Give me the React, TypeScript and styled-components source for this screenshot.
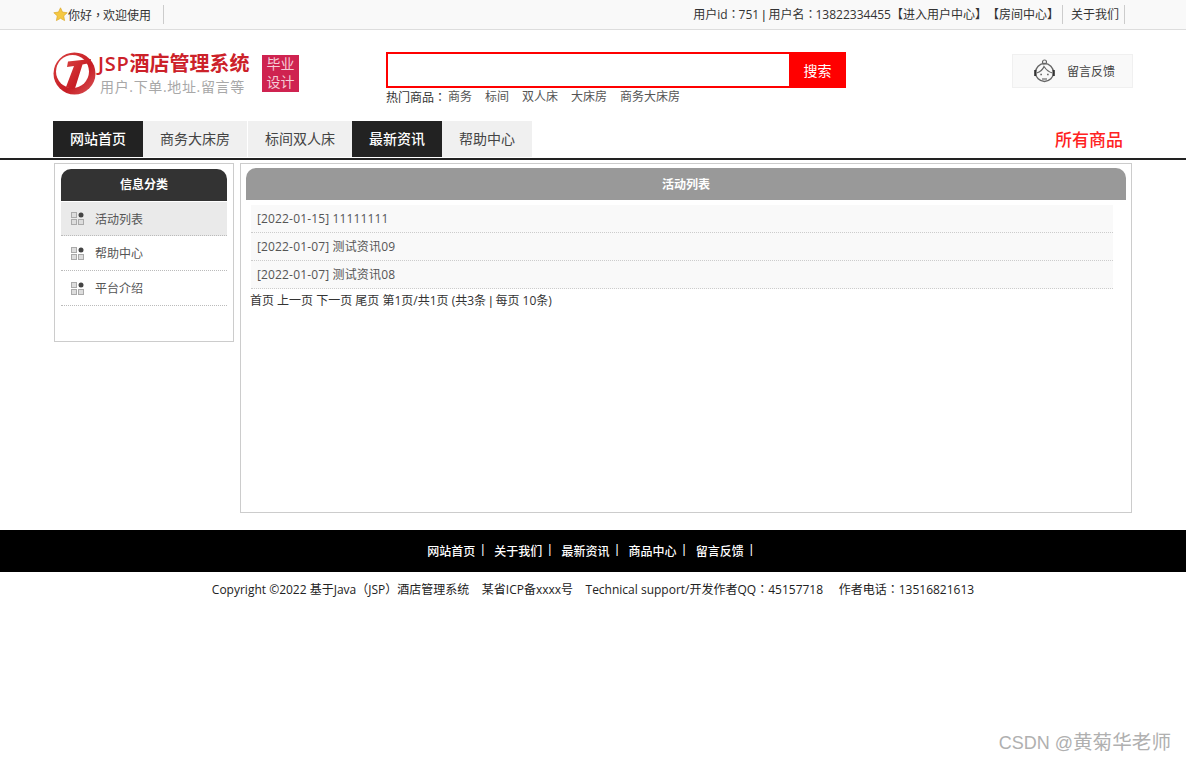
import React from "react";
import styled, { createGlobalStyle } from "styled-components";

const GlobalStyle = createGlobalStyle`
  html, body {
    margin: 0;
    padding: 0;
    background: #fff;
    font-family: "Open Sans", "Noto Sans CJK SC", sans-serif;
    font-size: 12px;
    color: #333;
  }
`;

const Page = styled.div`
  position: relative;
  height: 763px;
  overflow: hidden;
`;

const Punct = styled.span<{ $tight?: boolean }>`
  font-family: "Noto Sans CJK TC", sans-serif;
  letter-spacing: ${(p) => (p.$tight ? "-1px" : "0")};
`;

const Pipe = styled.span`
  font-family: "Liberation Sans", sans-serif;
`;

const TopBar = styled.div`
  height: 29px;
  background: #f9f9f9;
  border-bottom: 1px solid #ddd;
`;

const Wrap = styled.div`
  width: 1080px;
  margin: 0 auto;
  display: flex;
  align-items: center;
  justify-content: space-between;
`;

const TopWrap = styled(Wrap)`
  height: 29px;
`;

const TopLeft = styled.div`
  display: flex;
  align-items: center;
  height: 19px;
  padding-right: 12px;
  border-right: 1px solid #ccc;
`;

const TopRight = styled.div`
  display: flex;
  align-items: center;
  height: 19px;
  margin-right: 8px;
`;

const TopCell = styled.span<{ $bordered?: boolean }>`
  display: block;
  line-height: 19px;
  color: #333;
  white-space: pre;
  text-spacing-trim: space-all;
  ${(p) =>
    p.$bordered &&
    `
    margin-left: 3px;
    padding: 0 5px 0 8px;
    border-left: 1px solid #ccc;
    border-right: 1px solid #ccc;
  `}
`;

const Header = styled(Wrap)`
  height: 91px;
  align-items: flex-start;
  justify-content: flex-start;
`;

const Logo = styled.div`
  display: flex;
  align-items: center;
  margin-top: 22px;
  width: 333px;
`;

const LogoText = styled.div`
  margin-left: 2px;
  width: 149px;
`;

const LogoTitle = styled.div`
  font-size: 20px;
  font-weight: 700;
  line-height: 24px;
  color: #cc2129;
  white-space: nowrap;
`;

const LogoLatin = styled.span`
  font-weight: 600;
  letter-spacing: 0.7px;
`;

const LogoSub = styled.div`
  font-size: 14px;
  line-height: 19px;
  margin: 1px 0 -1px;
  padding-left: 2px;
  color: #a8a8a8;
  white-space: nowrap;
  letter-spacing: 0.65px;
`;

const Badge = styled.div`
  width: 37px;
  height: 37px;
  margin-left: 15px;
  background: #cf2350;
  color: #f5ccd6;
  font-size: 14px;
  line-height: 18px;
  text-align: center;
`;

const SearchCol = styled.div`
  width: 460px;
  margin-top: 22px;
`;

const SearchBox = styled.div`
  display: flex;
  height: 36px;
`;

const SearchInput = styled.div`
  flex: 1;
  box-sizing: border-box;
  border: 2px solid #f00;
  border-right: none;
  background: #fff;
`;

const SearchButton = styled.button`
  width: 57px;
  border: none;
  padding: 0;
  background: #f00;
  color: #fff;
  font: inherit;
  font-size: 14px;
`;

const HotRow = styled.div`
  display: flex;
  margin-top: 1px;
  height: 16px;
  line-height: 16px;
  color: #333;
`;

const HotLabel = styled.span`
  margin-right: 2px;
`;

const HotLink = styled.span`
  margin-right: 13px;
  color: #555;
`;

const Feedback = styled.div`
  box-sizing: border-box;
  width: 121px;
  height: 34px;
  margin-top: 24px;
  margin-left: auto;
  display: flex;
  align-items: center;
  padding-left: 20px;
  gap: 11px;
  background: #f9f9f9;
  border: 1px solid #f0f0f0;
  color: #444;
`;

const NavBar = styled.div`
  border-bottom: 2px solid #222;
  height: 37px;
`;

const NavWrap = styled(Wrap)`
  height: 36px;
  align-items: flex-start;
`;

const Tabs = styled.div`
  display: flex;
`;

const Tab = styled.div<{ $dark?: boolean; $spaced?: boolean }>`
  padding: 0 17px;
  height: 36px;
  line-height: 36px;
  font-size: 14px;
  font-weight: ${(p) => (p.$dark ? 500 : 400)};
  background: ${(p) => (p.$dark ? "#222" : "#f0f0f0")};
  color: ${(p) => (p.$dark ? "#fff" : "#444")};
  margin-left: ${(p) => (p.$spaced ? "1px" : "0")};
`;

const AllGoods = styled.div`
  font-size: 17px;
  line-height: 37px;
  font-weight: 500;
  color: #f22;
  margin-right: 10px;
`;

const Content = styled.div`
  width: 1080px;
  margin: 3px auto 0;
  display: flex;
  align-items: flex-start;
  padding-left: 1px;
  box-sizing: border-box;
`;

const Sidebar = styled.div`
  box-sizing: border-box;
  width: 180px;
  height: 179px;
  margin-right: 6px;
  padding: 5px 6px 0;
  border: 1px solid #ccc;
`;

const SideHead = styled.div`
  height: 32px;
  line-height: 32px;
  background: #333;
  color: #fff;
  font-weight: 700;
  text-align: center;
  border-radius: 10px 10px 0 0;
  margin-bottom: 1px;
`;

const SideItem = styled.div<{ $active?: boolean }>`
  box-sizing: border-box;
  height: ${(p) => (p.$active ? "34px" : "35px")};
  display: flex;
  align-items: center;
  padding-left: 10px;
  gap: 11px;
  color: #555;
  background: ${(p) => (p.$active ? "#eaeaea" : "transparent")};
  border-bottom: 1px dotted #bbb;
`;

const Main = styled.div`
  box-sizing: border-box;
  width: 892px;
  height: 350px;
  padding: 4px 5px 0;
  border: 1px solid #ccc;
`;

const MainHead = styled.div`
  height: 32px;
  line-height: 33px;
  background: #999;
  color: #fff;
  font-weight: 700;
  text-align: center;
  border-radius: 10px 10px 0 0;
  margin-bottom: 5px;
`;

const NewsRow = styled.div`
  box-sizing: border-box;
  width: 862px;
  height: 28px;
  line-height: 27px;
  margin-left: 5px;
  padding-left: 6px;
  background: #f9f9f9;
  border-bottom: 1px dotted #ccc;
  color: #555;
  letter-spacing: 0.15px;
`;

const Pager = styled.div`
  margin-left: 4px;
  line-height: 23px;
  color: #333;
`;

const FootNav = styled.div`
  height: 42px;
  margin-top: 17px;
  padding-right: 6px;
  background: #000;
  display: flex;
  align-items: center;
  justify-content: center;
  color: #fff;
  font-weight: 500;
`;

const FootLink = styled.span`
  display: flex;
  & + & {
    margin-left: 10px;
  }
`;

const FootPipe = styled(Pipe)`
  margin-left: 6px;
`;

const Copyright = styled.div`
  margin-top: 7px;
  line-height: 20px;
  text-align: center;
  color: #222;
  white-space: pre;
`;

const Watermark = styled.div`
  position: absolute;
  right: 15px;
  bottom: 6px;
  font-family: "Liberation Sans", "Noto Sans CJK SC", sans-serif;
  font-size: 18px;
  line-height: 28px;
  color: #b0b0b0;
`;

const WatermarkName = styled.span`
  font-size: 19.600px;
`;

const Star = () => (
  <svg width="15" height="15" viewBox="0 0 15 15" aria-hidden="true">
    <path
      d="M7.500.8l2 4.300 4.700.6-3.500 3.200.9 4.700-4.100-2.300-4.100 2.300.9-4.700L.8 5.700l4.700-.6z"
      fill="#f5c842"
      stroke="#dca92a"
      strokeWidth=".7"
    />
  </svg>
);

const LogoMark = () => (
  <svg width="43" height="43" viewBox="0 0 43 43" aria-hidden="true">
    <defs>
      <linearGradient id="logoRed" x1="0" y1="0" x2="1" y2="1">
        <stop offset="0" stopColor="#d8403f" />
        <stop offset="0.6" stopColor="#c71d24" />
        <stop offset="1" stopColor="#d9575a" />
      </linearGradient>
    </defs>
    <circle cx="21.500" cy="21.500" r="21" fill="url(#logoRed)" />
    <circle cx="19.500" cy="19.500" r="16.500" fill="#fff" />
    <path d="M15 9.500L38 7 37 11 29.500 12.500 21.500 38 13 35 21 14 14 15z" fill="url(#logoRed)" />
  </svg>
);

const Girl = () => (
  <svg width="23" height="24" viewBox="0 0 23 24" fill="none" stroke="#666" aria-hidden="true">
    <circle cx="11.500" cy="13.500" r="9" strokeWidth="1.400" />
    <circle cx="11.500" cy="3" r="2" strokeWidth="1.200" />
    <path d="M3.500 14c3.500-1 6-2.500 7.500-6.500 2 3 4.500 5.500 8.500 6.500" strokeWidth="1.200" />
    <path d="M1.200 11h2.100v6H1.200zM19.700 11h2.100v6h-2.100z" fill="#333" stroke="none" />
    <path d="M7.500 15.500h1.200M14.300 15.500h1.200" strokeWidth="1.500" stroke="#333" />
    <path d="M9 20h5" stroke="#999" strokeWidth="1.800" />
  </svg>
);

const GridIcon = () => (
  <svg width="13" height="13" viewBox="0 0 13 13" fill="#ddd" stroke="#aaa" aria-hidden="true">
    <rect x=".5" y=".5" width="5" height="5" />
    <rect x=".5" y="7.500" width="5" height="5" />
    <rect x="7.500" y="7.500" width="5" height="5" />
    <circle cx="10" cy="3" r="2.500" fill="#444" stroke="none" />
  </svg>
);

const hotLinks = ["商务", "标间", "双人床", "大床房", "商务大床房"];
const sideItems = ["活动列表", "帮助中心", "平台介绍"];
const news = ["[2022-01-15] 11111111", "[2022-01-07] 测试资讯09", "[2022-01-07] 测试资讯08"];
const footLinks = ["网站首页", "关于我们", "最新资讯", "商品中心", "留言反馈"];

export default function App() {
  return (
    <Page>
      <GlobalStyle />
      <TopBar>
        <TopWrap>
          <TopLeft>
            <Star />
            <span>
              你好<Punct $tight>，</Punct>欢迎使用
            </span>
          </TopLeft>
          <TopRight>
            <TopCell>
              用户id<Punct $tight>：</Punct>751 <Pipe>|</Pipe> 用户名<Punct $tight>：</Punct>
              13822334455【进入用户中心】【房间中心】
            </TopCell>
            <TopCell $bordered>关于我们</TopCell>
          </TopRight>
        </TopWrap>
      </TopBar>
      <Header>
        <Logo>
          <LogoMark />
          <LogoText>
            <LogoTitle>
              <LogoLatin>JSP</LogoLatin>酒店管理系统
            </LogoTitle>
            <LogoSub>用户.下单.地址.留言等</LogoSub>
          </LogoText>
          <Badge>
            毕业
            <br />
            设计
          </Badge>
        </Logo>
        <SearchCol>
          <SearchBox>
            <SearchInput />
            <SearchButton>搜索</SearchButton>
          </SearchBox>
          <HotRow>
            <HotLabel>
              热门商品<Punct>：</Punct>
            </HotLabel>
            {hotLinks.map((h) => (
              <HotLink key={h}>{h}</HotLink>
            ))}
          </HotRow>
        </SearchCol>
        <Feedback>
          <Girl />
          <span>留言反馈</span>
        </Feedback>
      </Header>
      <NavBar>
        <NavWrap>
          <Tabs>
            <Tab $dark>网站首页</Tab>
            <Tab>商务大床房</Tab>
            <Tab $spaced>标间双人床</Tab>
            <Tab $dark>最新资讯</Tab>
            <Tab>帮助中心</Tab>
          </Tabs>
          <AllGoods>所有商品</AllGoods>
        </NavWrap>
      </NavBar>
      <Content>
        <Sidebar>
          <SideHead>信息分类</SideHead>
          {sideItems.map((s, i) => (
            <SideItem key={s} $active={i === 0}>
              <GridIcon />
              <span>{s}</span>
            </SideItem>
          ))}
        </Sidebar>
        <Main>
          <MainHead>活动列表</MainHead>
          {news.map((n) => (
            <NewsRow key={n}>{n}</NewsRow>
          ))}
          <Pager>
            首页 上一页 下一页 尾页 第1页/共1页 (共3条 <Pipe>|</Pipe> 每页 10条)
          </Pager>
        </Main>
      </Content>
      <FootNav>
        {footLinks.map((f) => (
          <FootLink key={f}>
            {f}
            <FootPipe>|</FootPipe>
          </FootLink>
        ))}
      </FootNav>
      <Copyright>
        Copyright ©2022 基于Java<Punct>（</Punct>JSP<Punct>）</Punct>
        {"酒店管理系统    某省ICP备xxxx号    Technical support/开发作者QQ"}
        <Punct>：</Punct>
        {"45157718     作者电话"}
        <Punct>：</Punct>13516821613
      </Copyright>
      <Watermark>
        CSDN @<WatermarkName>黄菊华老师</WatermarkName>
      </Watermark>
    </Page>
  );
}
